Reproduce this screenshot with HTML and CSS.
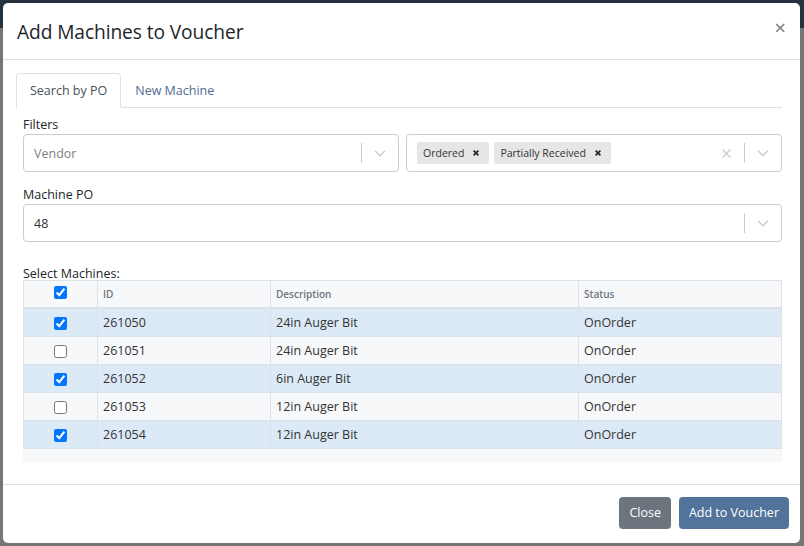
FILE: index.html
```html
<!DOCTYPE html>
<html lang="en">
<head>
    <meta charset="UTF-8">
    <meta name="viewport" content="width=device-width, initial-scale=1.0">
    <title>Add Machines to Voucher</title>
    <link rel="stylesheet" href="styles.css">
</head>
<body>
    <div class="modal">
        <div class="modal-header">
            <h5 class="modal-title">Add Machines to Voucher</h5>
            <span class="close">&times;</span>
        </div>
        <div class="modal-body">
            <ul class="tabs">
                <li class="tab active">Search by PO</li>
                <li class="tab">New Machine</li>
            </ul>
            <div class="tab-content">
                <label class="field-label">Filters</label>
                <div class="filter-row">
                    <div class="select">
                        <div class="select-value placeholder">Vendor</div>
                        <div class="select-indicators">
                            <span class="sep"></span>
                            <svg class="chevron" viewBox="0 0 20 20"><path d="M4.5 7.5l5.5 5.5 5.5-5.5" fill="none" stroke="currentColor" stroke-width="1.6"/></svg>
                        </div>
                    </div>
                    <div class="select">
                        <div class="select-value">
                            <span class="chip">Ordered <svg viewBox="0 0 10 10"><path d="M2 2l6 6M8 2L2 8" stroke="currentColor" stroke-width="2"/></svg></span>
                            <span class="chip">Partially Received <svg viewBox="0 0 10 10"><path d="M2 2l6 6M8 2L2 8" stroke="currentColor" stroke-width="2"/></svg></span>
                        </div>
                        <div class="select-indicators">
                            <svg class="clear" viewBox="0 0 20 20"><path d="M4 4l12 12M16 4L4 16" fill="none" stroke="currentColor" stroke-width="2.2"/></svg>
                            <span class="sep"></span>
                            <svg class="chevron" viewBox="0 0 20 20"><path d="M4.5 7.5l5.5 5.5 5.5-5.5" fill="none" stroke="currentColor" stroke-width="1.6"/></svg>
                        </div>
                    </div>
                </div>

                <label class="field-label">Machine PO</label>
                <div class="select">
                    <div class="select-value">48</div>
                    <div class="select-indicators">
                        <span class="sep"></span>
                        <svg class="chevron" viewBox="0 0 20 20"><path d="M4.5 7.5l5.5 5.5 5.5-5.5" fill="none" stroke="currentColor" stroke-width="1.6"/></svg>
                    </div>
                </div>

                <label class="field-label table-label">Select Machines:</label>
                <div class="grid">
                    <table>
                        <thead>
                            <tr>
                                <th class="check"><input type="checkbox" checked></th>
                                <th class="col-id">ID</th>
                                <th class="col-desc">Description</th>
                                <th>Status</th>
                            </tr>
                        </thead>
                        <tbody>
                            <tr class="selected">
                                <td class="check"><input type="checkbox" checked></td>
                                <td>261050</td><td>24in Auger Bit</td><td>OnOrder</td>
                            </tr>
                            <tr>
                                <td class="check"><input type="checkbox"></td>
                                <td>261051</td><td>24in Auger Bit</td><td>OnOrder</td>
                            </tr>
                            <tr class="selected">
                                <td class="check"><input type="checkbox" checked></td>
                                <td>261052</td><td>6in Auger Bit</td><td>OnOrder</td>
                            </tr>
                            <tr>
                                <td class="check"><input type="checkbox"></td>
                                <td>261053</td><td>12in Auger Bit</td><td>OnOrder</td>
                            </tr>
                            <tr class="selected">
                                <td class="check"><input type="checkbox" checked></td>
                                <td>261054</td><td>12in Auger Bit</td><td>OnOrder</td>
                            </tr>
                        </tbody>
                    </table>
                    <div class="grid-footer"></div>
                </div>
            </div>
        </div>
        <div class="modal-footer">
            <button class="btn btn-secondary">Close</button>
            <button class="btn btn-primary">Add to Voucher</button>
        </div>
    </div>
</body>
</html>
```

FILE: styles.css
```css
html, body {
    height: 100%;
}
body {
    margin: 0;
    padding: 3px 4px 0 3px;
    box-sizing: border-box;
    background: linear-gradient(#243240 0, #243240 28px, #767676 28px);
    font-family: "Open Sans", "Noto Sans", sans-serif;
    color: #212529;
}
.modal {
    width: 797px;
    height: 540px;
    background: #fff;
    border-radius: 5px;
    display: flex;
    flex-direction: column;
    box-sizing: border-box;
}
.modal-header {
    height: 57px;
    box-sizing: border-box;
    display: flex;
    align-items: center;
    justify-content: space-between;
    padding: 0 14px 0 14px;
    border-bottom: 1px solid #dee2e6;
}
.modal-title {
    margin: 0;
    font-size: 19.2px;
    font-weight: 500;
    letter-spacing: -0.1px;
}
.close {
    font-size: 20px;
    color: #777;
    line-height: 1;
    margin-top: -6px;
}
.modal-body {
    flex: 1;
    padding: 13px 18px 0 13px;
}
.tabs {
    list-style: none;
    margin: 0;
    padding: 0;
    display: flex;
    border-bottom: 1px solid #dee2e6;
}
.tab {
    height: 33px;
    padding: 0 13px;
    display: flex;
    align-items: center;
    font-size: 12.5px;
    color: #4e6d8f;
    border: 1px solid transparent;
    border-top-left-radius: 4px;
    border-top-right-radius: 4px;
    margin-bottom: -1px;
}
.tab.active {
    color: #495057;
    background: #fff;
    border-color: #dee2e6 #dee2e6 #fff;
}
.tab-content {
    padding: 9px 0 0 7px;
}
.field-label {
    display: block;
    font-size: 12.5px;
    line-height: 16px;
    margin-bottom: 1px;
}
.filter-row {
    display: flex;
    gap: 7px;
    margin-bottom: 15px;
}
.filter-row .select {
    flex: 1;
}
.select {
    height: 38px;
    box-sizing: border-box;
    border: 1px solid #ccc;
    border-radius: 4px;
    display: flex;
    align-items: center;
    background: #fff;
}
.select-value {
    flex: 1;
    padding-left: 10px;
    font-size: 12.5px;
    color: #333;
    display: flex;
    align-items: center;
    gap: 5px;
}
.select-value.placeholder {
    color: #808080;
}
.chip {
    background: #e6e6e6;
    border-radius: 2px;
    font-size: 10.5px;
    color: #333;
    height: 22px;
    display: flex;
    align-items: center;
    padding: 0 0 0 6px;
}
.chip svg {
    width: 8px;
    height: 8px;
    padding: 0 9px 0 8px;
    color: #222;
}
.select-indicators {
    display: flex;
    align-items: center;
    color: #ccc;
    height: 100%;
}
.sep {
    width: 1px;
    height: 20px;
    background: #ccc;
}
.chevron {
    width: 18px;
    height: 18px;
    padding: 0 9px;
}
.clear {
    width: 13px;
    height: 13px;
    padding: 0 11px;
}
.table-label {
    margin-top: 25px;
    line-height: 14px;
    margin-bottom: -1px;
}
.grid {
    background: #f7f8fa;
}
table {
    width: 100%;
    border-collapse: collapse;
    font-size: 12.5px;
}
th, td {
    border: 1px solid #dee2e6;
    text-align: left;
    padding: 0 5px;
}
th {
    height: 26px;
    font-size: 10px;
    font-weight: 600;
    color: #6c757d;
    background: #f7f8fa;
    border-bottom: 2px solid #dee2e6;
}
td {
    height: 27px;
    color: #333;
    background: #f7f8fa;
}
tr.selected td {
    background: #dceaf7;
}
.check {
    width: 73px;
    text-align: center;
    padding: 0;
}
.col-id {
    width: 162px;
}
.col-desc {
    width: 297px;
}
input[type="checkbox"] {
    margin: 0;
    width: 13px;
    height: 13px;
    vertical-align: middle;
    accent-color: #0075ff;
}
th input[type="checkbox"] {
    margin-top: -6px;
}
.grid-footer {
    height: 13px;
}
.modal-footer {
    height: 59px;
    box-sizing: border-box;
    border-top: 1px solid #dee2e6;
    display: flex;
    justify-content: flex-end;
    align-items: center;
    gap: 8px;
    padding: 0 11px 3px 0;
}
.btn {
    height: 32px;
    border: none;
    border-radius: 4px;
    color: #fff;
    font-family: "Open Sans", "Noto Sans", sans-serif;
    font-size: 12.5px;
    padding: 0 10px;
}
.btn-secondary {
    background: #6c757d;
}
.btn-primary {
    background: #52739a;
}
```
